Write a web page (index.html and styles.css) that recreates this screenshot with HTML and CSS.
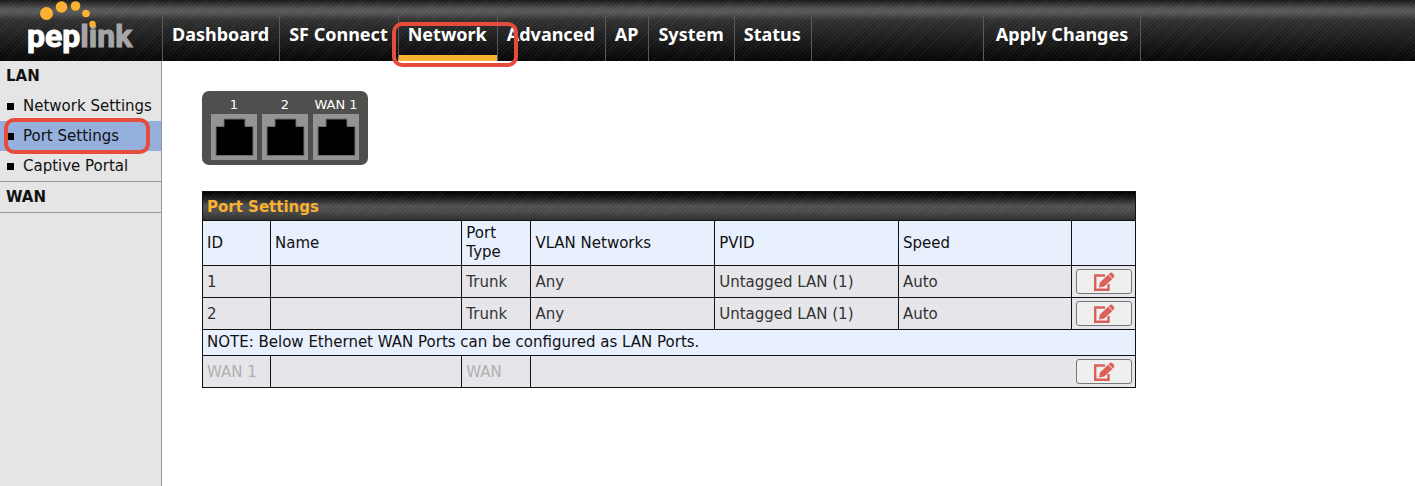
FILE: index.html
```html
<!DOCTYPE html>
<html lang="en">
<head>
  <meta charset="UTF-8">
  <meta name="viewport" content="width=device-width, initial-scale=1.0">
  <title>Port Settings</title>
  <link rel="stylesheet" href="styles.css">
</head>
<body>
  <svg class="sprite" aria-hidden="true">
    <symbol id="icon-edit" viewBox="0 0 22 20">
      <path d="M12 3.500H2.200V17.700H15.500V12" fill="none" stroke="#dd6058" stroke-width="2.400"/>
      <path d="M6 15.500L7 10.500L15 2.800L19.400 6.900L11.200 14.600Z" fill="#dd6058"/>
      <path d="M15.500 2.300L17 1Q18.200 0 19.300 1.100L21 2.900Q22 4 21 5L19.900 6.400Z" fill="#dd6058"/>
    </symbol>
    <symbol id="icon-port" viewBox="0 0 46 46">
      <rect width="46" height="46" fill="#949494"/>
      <path d="M5 41.500V12.500H13V5H34V12.500H42V41.500Z" fill="#000" stroke="#6e6e6e"/>
    </symbol>
  </svg>

  <header class="header">
    <a class="logo" href="#" aria-label="peplink">
      <svg width="161" height="60" viewBox="0 0 161 60">
        <text class="logo-text" x="27" y="47"><tspan class="logo-pep">pep</tspan><tspan class="logo-link">link</tspan></text>
        <g fill="#fbb131">
          <circle cx="46.500" cy="13.500" r="6.500"/>
          <circle cx="61.500" cy="7" r="5.800"/>
          <circle cx="75.500" cy="6" r="4.800"/>
          <circle cx="86" cy="13.500" r="3.800"/>
          <circle cx="92.500" cy="24" r="3.200"/>
        </g>
      </svg>
    </a>
    <nav class="nav">
      <a href="#">Dashboard</a>
      <a href="#">SF Connect</a>
      <a href="#" class="active">Network<span class="mark mark-nav"></span></a>
      <a href="#">Advanced</a>
      <a href="#">AP</a>
      <a href="#">System</a>
      <a href="#">Status</a>
      <a href="#" class="apply">Apply Changes</a>
    </nav>
  </header>

  <div class="layout">
    <aside class="sidebar">
      <section class="menu">
        <h2>LAN</h2>
        <a href="#">Network Settings</a>
        <a href="#" class="selected">Port Settings<span class="mark mark-side"></span></a>
        <a href="#">Captive Portal</a>
      </section>
      <section class="menu">
        <h2>WAN</h2>
      </section>
    </aside>

    <main class="content">
      <div class="ports">
        <div class="port"><span>1</span><svg><use href="#icon-port"/></svg></div>
        <div class="port"><span>2</span><svg><use href="#icon-port"/></svg></div>
        <div class="port"><span>WAN 1</span><svg><use href="#icon-port"/></svg></div>
      </div>

      <table class="settings">
        <caption>Port Settings</caption>
        <colgroup>
          <col class="col-id">
          <col class="col-name">
          <col class="col-type">
          <col class="col-vlan">
          <col class="col-pvid">
          <col class="col-speed">
          <col class="col-edit">
        </colgroup>
        <thead>
          <tr>
            <th>ID</th>
            <th>Name</th>
            <th>Port Type</th>
            <th>VLAN Networks</th>
            <th>PVID</th>
            <th>Speed</th>
            <th></th>
          </tr>
        </thead>
        <tbody>
          <tr>
            <td>1</td>
            <td></td>
            <td>Trunk</td>
            <td>Any</td>
            <td>Untagged LAN (1)</td>
            <td>Auto</td>
            <td class="edit"><button type="button" aria-label="Edit port 1"><svg><use href="#icon-edit"/></svg></button></td>
          </tr>
          <tr>
            <td>2</td>
            <td></td>
            <td>Trunk</td>
            <td>Any</td>
            <td>Untagged LAN (1)</td>
            <td>Auto</td>
            <td class="edit"><button type="button" aria-label="Edit port 2"><svg><use href="#icon-edit"/></svg></button></td>
          </tr>
          <tr class="note">
            <td colspan="7">NOTE: Below Ethernet WAN Ports can be configured as LAN Ports.</td>
          </tr>
          <tr class="disabled">
            <td>WAN 1</td>
            <td></td>
            <td>WAN</td>
            <td class="edit" colspan="4"><button type="button" aria-label="Edit WAN 1"><svg><use href="#icon-edit"/></svg></button></td>
          </tr>
        </tbody>
      </table>
    </main>
  </div>
</body>
</html>
```

FILE: styles.css
```css
* {
    box-sizing: border-box;
}
body {
    margin: 0;
    min-height: 100vh;
    display: flex;
    flex-direction: column;
    background: #fff;
    color: #111;
    font-family: Verdana, "DejaVu Sans", sans-serif;
    font-size: 15px;
}
a {
    color: inherit;
    text-decoration: none;
}
.sprite {
    display: none;
}

/* Top bar */
.header {
    display: flex;
    height: 61px;
    background:
        repeating-linear-gradient(135deg, rgba(255, 255, 255, 0.05) 0 1px, transparent 1px 3px),
        linear-gradient(#181818 0, #555 9px, #555 13px, #303030 20px, #202020 35px, #060606 60px);
}
.logo {
    width: 162px;
}
.logo-text {
    font-family: Roboto, sans-serif;
    font-size: 32px;
    font-weight: 700;
}
.logo-pep {
    fill: #fff;
    stroke: #fff;
}
.logo-link {
    fill: #a6a6a6;
    stroke: #a6a6a6;
}
.nav {
    flex: 1;
    display: flex;
    padding-top: 16px;
}
.nav a {
    position: relative;
    padding: 6px 10px 0 9px;
    border-left: 1px solid #595959;
    color: #fff;
    font-family: "Noto Sans", sans-serif;
    font-size: 18px;
    font-weight: 700;
    line-height: 24px;
    white-space: nowrap;
}
.nav a:nth-last-child(2) {
    border-right: 1px solid #595959;
}
.nav .active {
    border-bottom: 6px solid #fbb131;
}
.nav .apply {
    margin-left: 171px;
    padding: 6px 12px 0;
    border-right: 1px solid #595959;
}

/* Red highlight frames */
.mark {
    position: absolute;
    z-index: 1;
    border: 4px solid #e64c3b;
    border-radius: 10px;
    pointer-events: none;
}
.mark-nav {
    top: 6px;
    right: -21px;
    bottom: -12px;
    left: -7px;
}
.mark-side {
    top: -3px;
    right: 11px;
    bottom: -3px;
    left: 4px;
}

/* Side menu */
.layout {
    flex: 1;
    display: flex;
}
.sidebar {
    width: 162px;
    background: #e5e5e5;
    border-right: 1px solid #999;
}
.menu {
    border-bottom: 1px solid #999;
}
.menu h2 {
    margin: 0;
    padding-left: 6px;
    font-size: 15px;
    line-height: 30px;
}
.menu a {
    position: relative;
    display: flex;
    align-items: center;
    gap: 9px;
    padding-left: 7px;
    line-height: 30px;
    white-space: nowrap;
}
.menu a::before {
    content: "";
    width: 7px;
    height: 7px;
    background: #000;
}
.menu .selected {
    background: #95b0dc;
}

/* Port panel */
.content {
    flex: 1;
    padding: 30px 0 30px 40px;
}
.ports {
    display: inline-flex;
    gap: 5px;
    padding: 5px 9px;
    background: #4f4f4d;
    border-radius: 7px;
}
.port {
    display: flex;
    flex-direction: column;
    align-items: center;
    width: 46px;
    color: #fff;
    font-size: 13px;
    line-height: 18px;
    white-space: nowrap;
}
.port svg {
    width: 46px;
    height: 46px;
}

/* Settings table */
.settings {
    width: 77%;
    margin-top: 26px;
    table-layout: fixed;
    border-collapse: collapse;
    line-height: 19px;
}
.settings caption {
    padding: 6px 4px 3px;
    border: 1px solid #111;
    border-bottom: 0;
    background:
        repeating-linear-gradient(135deg, rgba(255, 255, 255, 0.05) 0 1px, transparent 1px 3px),
        linear-gradient(#000, #1c1c1c 6px, #505050 14px, #484848 20px, #2c2c2c);
    color: #fbb131;
    font-weight: 700;
    text-align: left;
}
.col-id { width: 7.3%; }
.col-name { width: 20.5%; }
.col-type { width: 7.4%; }
.col-vlan { width: 19.7%; }
.col-pvid { width: 19.7%; }
.col-speed { width: 18.5%; }
.col-edit { width: 6.9%; }
.settings th,
.settings td {
    padding: 3px 4px;
    border: 1px solid #111;
    font-weight: 400;
    text-align: left;
}
.settings th {
    background: #e8f0fd;
}
.settings td {
    height: 32px;
    padding-top: 5px;
    background: #e6e5e9;
    color: #333;
}
.settings .note td {
    height: 26px;
    padding-top: 3px;
    background: #e8f0fd;
    color: #111;
}
.settings .disabled td {
    color: #b0b0b0;
}
.settings .edit {
    padding: 3px;
    text-align: right;
}
.edit button {
    display: inline-flex;
    justify-content: center;
    align-items: center;
    width: 56px;
    height: 25px;
    padding: 0;
    background: #efefef;
    border: 1px solid #777;
    border-radius: 3px;
    vertical-align: top;
    cursor: pointer;
}
.edit svg {
    width: 22px;
    height: 20px;
}
```
